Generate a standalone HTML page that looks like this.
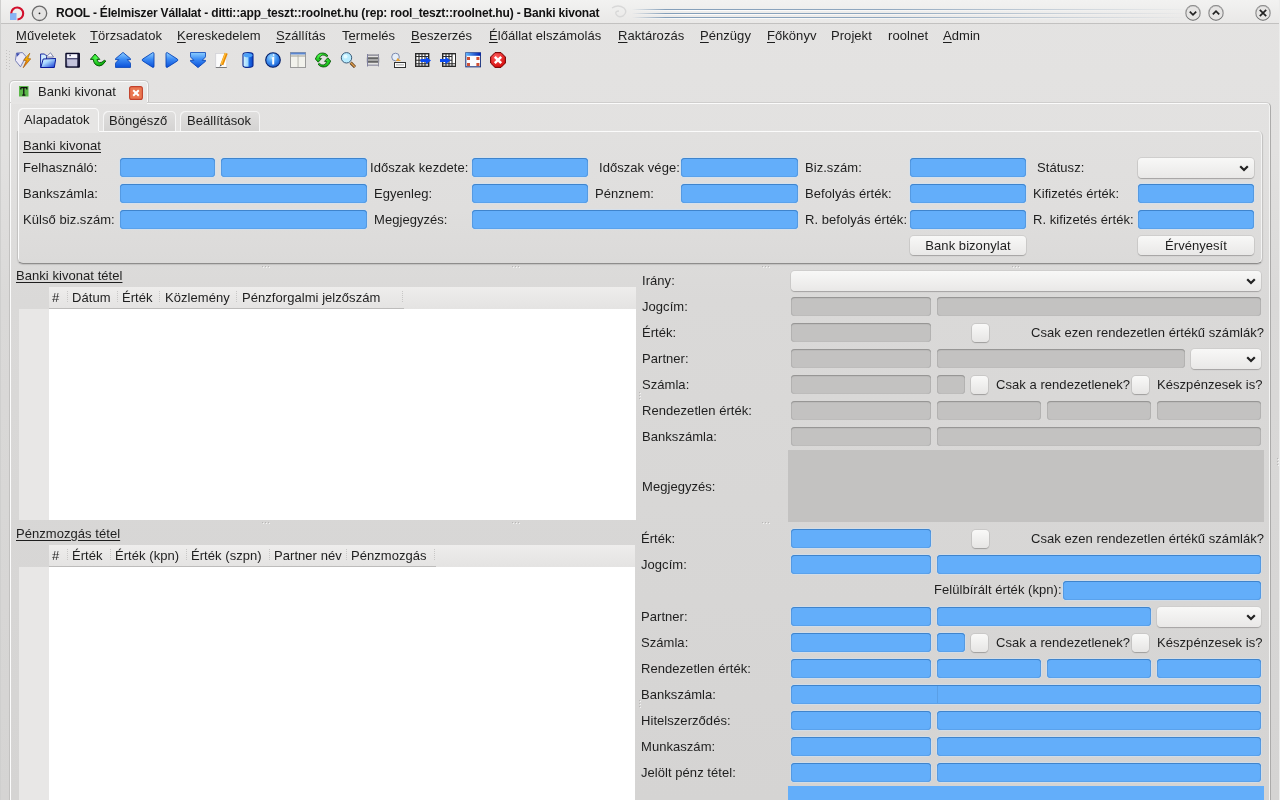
<!DOCTYPE html><html><head><meta charset="utf-8"><style>
*{margin:0;padding:0;box-sizing:border-box}
html,body{width:1280px;height:800px;overflow:hidden}
body{position:relative;background:linear-gradient(#e4e3e2 0px,#e2e1e0 150px,#dad9d8 300px,#d8d7d6 500px,#d5d4d3 800px);font-family:"Liberation Sans",sans-serif;font-size:13px;color:#1e1e1e}
div,svg{position:absolute}
.t{white-space:pre;line-height:15px;font-size:13px;letter-spacing:0.05px;will-change:transform}
.u{text-decoration:underline;text-underline-offset:2px}
.fld{border-radius:4px}
.fld.b{background:#63aefa;box-shadow:inset 0 1px 0 #3f84cc, inset 1px 0 0 #559ae2, inset -1px 0 0 #559ae2, inset 0 -1px 0 #5aa2ec, 0 0 0 1px rgba(205,225,245,0.55)}
.fld.g{background:#c3c2c1;box-shadow:inset 0 1px 0 #979695, inset 0 2px 0 #bbbab9, inset 1px 0 0 #b3b2b1, inset -1px 0 0 #b3b2b1, inset 0 -1px 0 #bdbcbb}
.cmb,.btn{border-radius:4px;background:linear-gradient(#f8f8f7,#e9e8e7);box-shadow:0 1px 1px #a5a4a3, 0 0 0 1px #cfcecd}
.btn span{position:absolute;left:0;right:0;top:2px;text-align:center;white-space:pre;line-height:15px;letter-spacing:0.05px;will-change:transform}
.sep{width:1px;height:11px;background:repeating-linear-gradient(#c8c7c6 0 1px,transparent 1px 2px)}
.chk{border-radius:4px;background:linear-gradient(#f9f9f8,#e6e5e4);box-shadow:0 1px 1px #a09f9e, 0 0 0 1px #c9c8c7}
</style></head><body><div style="left:0;top:0;width:1280px;height:23px;background:linear-gradient(#f2f2f1,#e9e8e7)"></div>
<div style="left:0;top:23px;width:1280px;height:1px;background:#c2c1c0"></div>
<div class="t" style="left:56px;top:6px;font-weight:bold;font-size:12px;letter-spacing:-0.18px;color:#111">ROOL - Élelmiszer Vállalat - ditti::app_teszt::roolnet.hu (rep: rool_teszt::roolnet.hu) - Banki kivonat</div>
<div class="t" style="left:16px;top:28px"><span class="u">M</span>űveletek</div>
<div class="t" style="left:90px;top:28px"><span class="u">T</span>örzsadatok</div>
<div class="t" style="left:177px;top:28px"><span class="u">K</span>ereskedelem</div>
<div class="t" style="left:276px;top:28px"><span class="u">S</span>zállítás</div>
<div class="t" style="left:342px;top:28px">T<span class="u">e</span>rmelés</div>
<div class="t" style="left:411px;top:28px"><span class="u">B</span>eszerzés</div>
<div class="t" style="left:489px;top:28px"><span class="u">É</span>lőállat elszámolás</div>
<div class="t" style="left:618px;top:28px"><span class="u">R</span>aktározás</div>
<div class="t" style="left:700px;top:28px"><span class="u">P</span>énzügy</div>
<div class="t" style="left:767px;top:28px"><span class="u">F</span>őkönyv</div>
<div class="t" style="left:831px;top:28px">Pro<span class="u">j</span>ekt</div>
<div class="t" style="left:888px;top:28px">roolnet</div>
<div class="t" style="left:943px;top:28px"><span class="u">A</span>dmin</div>
<svg style="left:8px;top:4px" width="18" height="18" viewBox="0 0 18 18"><rect x="2" y="9" width="6.5" height="7" fill="#8ab4f4"/><path d="M3.2 9.2 A6 6 0 1 1 9.5 15.5" fill="none" stroke="#d2102c" stroke-width="2.1"/></svg>
<svg style="left:31px;top:5px" width="17" height="17" viewBox="0 0 17 17"><circle cx="8.5" cy="8.3" r="7.2" fill="#e4e3e2" stroke="#6a6a6a" stroke-width="1.3"/><circle cx="8.5" cy="8.3" r="0.9" fill="#222"/></svg>
<svg style="left:606px;top:2px" width="26" height="20" viewBox="0 0 26 20"><path d="M6 6 Q12 2 18 6 Q22 10 17 14 Q12 16 10 12 Q9 9 13 9" fill="none" stroke="#d8d8d8" stroke-width="1.4"/></svg>
<div style="left:632px;top:9px;width:560px;height:1px;background:linear-gradient(to right,rgba(120,150,180,0) 0%,rgba(120,150,180,0.9) 6%,rgba(120,150,180,0.8) 45%,rgba(150,170,190,0.35) 80%,rgba(150,170,190,0) 100%)"></div>
<div style="left:632px;top:10px;width:560px;height:1px;background:linear-gradient(to right,rgba(255,255,255,0) 0%,rgba(255,255,255,0.9) 10%,rgba(255,255,255,0) 100%)"></div>
<div style="left:632px;top:13px;width:560px;height:1px;background:linear-gradient(to right,rgba(120,150,180,0) 0%,rgba(120,150,180,0.9) 6%,rgba(120,150,180,0.8) 45%,rgba(150,170,190,0.35) 80%,rgba(150,170,190,0) 100%)"></div>
<div style="left:632px;top:14px;width:560px;height:1px;background:linear-gradient(to right,rgba(255,255,255,0) 0%,rgba(255,255,255,0.9) 10%,rgba(255,255,255,0) 100%)"></div>
<div style="left:632px;top:17px;width:560px;height:1px;background:linear-gradient(to right,rgba(120,150,180,0) 0%,rgba(120,150,180,0.9) 6%,rgba(120,150,180,0.8) 45%,rgba(150,170,190,0.35) 80%,rgba(150,170,190,0) 100%)"></div>
<div style="left:632px;top:18px;width:560px;height:1px;background:linear-gradient(to right,rgba(255,255,255,0) 0%,rgba(255,255,255,0.9) 10%,rgba(255,255,255,0) 100%)"></div>
<svg style="left:1183.5px;top:4px" width="18" height="18" viewBox="0 0 18 18"><circle cx="9" cy="9" r="7.3" fill="#e6e5e4" stroke="#727272" stroke-width="1.2"/><circle cx="9" cy="9.6" r="7.6" fill="none" stroke="#ffffff" stroke-opacity="0.6" stroke-width="0.6"/><path d="M5.8 7.6 L9 10.8 L12.2 7.6" fill="none" stroke="#222" stroke-width="1.7"/></svg>
<svg style="left:1206.5px;top:4px" width="18" height="18" viewBox="0 0 18 18"><circle cx="9" cy="9" r="7.3" fill="#e6e5e4" stroke="#727272" stroke-width="1.2"/><circle cx="9" cy="9.6" r="7.6" fill="none" stroke="#ffffff" stroke-opacity="0.6" stroke-width="0.6"/><path d="M5.8 10.4 L9 7.2 L12.2 10.4" fill="none" stroke="#222" stroke-width="1.7"/></svg>
<svg style="left:1253.5px;top:4px" width="18" height="18" viewBox="0 0 18 18"><circle cx="9" cy="9" r="7.3" fill="#e6e5e4" stroke="#727272" stroke-width="1.2"/><circle cx="9" cy="9.6" r="7.6" fill="none" stroke="#ffffff" stroke-opacity="0.6" stroke-width="0.6"/><path d="M5.8 5.8 L12.2 12.2 M12.2 5.8 L5.8 12.2" fill="none" stroke="#222" stroke-width="1.7"/></svg>
<div style="left:6px;top:50px;width:1px;height:1px;background:#c4c3c2"></div>
<div style="left:9px;top:51px;width:1px;height:1px;background:#c4c3c2"></div>
<div style="left:6px;top:53px;width:1px;height:1px;background:#c4c3c2"></div>
<div style="left:9px;top:54px;width:1px;height:1px;background:#c4c3c2"></div>
<div style="left:6px;top:56px;width:1px;height:1px;background:#c4c3c2"></div>
<div style="left:9px;top:57px;width:1px;height:1px;background:#c4c3c2"></div>
<div style="left:6px;top:59px;width:1px;height:1px;background:#c4c3c2"></div>
<div style="left:9px;top:60px;width:1px;height:1px;background:#c4c3c2"></div>
<div style="left:6px;top:62px;width:1px;height:1px;background:#c4c3c2"></div>
<div style="left:9px;top:63px;width:1px;height:1px;background:#c4c3c2"></div>
<div style="left:6px;top:65px;width:1px;height:1px;background:#c4c3c2"></div>
<div style="left:9px;top:66px;width:1px;height:1px;background:#c4c3c2"></div>
<div style="left:6px;top:68px;width:1px;height:1px;background:#c4c3c2"></div>
<div style="left:9px;top:69px;width:1px;height:1px;background:#c4c3c2"></div>
<svg width="0" height="0" style="position:absolute"><defs>
<linearGradient id="gBlue" x1="0" y1="0" x2="0" y2="1"><stop offset="0" stop-color="#8fd0ff"/><stop offset="0.45" stop-color="#3c8cf5"/><stop offset="1" stop-color="#0a4fd8"/></linearGradient>
<linearGradient id="gBlueH" x1="0" y1="0" x2="1" y2="0"><stop offset="0" stop-color="#d8f6ff"/><stop offset="0.5" stop-color="#9ad8ff"/><stop offset="0.6" stop-color="#1e6ee8"/><stop offset="1" stop-color="#0b45c8"/></linearGradient>
<linearGradient id="gBolt" x1="0" y1="0" x2="0" y2="1"><stop offset="0" stop-color="#ffe000"/><stop offset="1" stop-color="#e05a00"/></linearGradient>
<linearGradient id="gFolder" x1="0" y1="0" x2="1" y2="1"><stop offset="0" stop-color="#e8f8ff"/><stop offset="0.4" stop-color="#a8d8ff"/><stop offset="1" stop-color="#0830d0"/></linearGradient>
<linearGradient id="gFloppy" x1="0" y1="0" x2="0" y2="1"><stop offset="0" stop-color="#f4f4ff"/><stop offset="1" stop-color="#9090b8"/></linearGradient>
<radialGradient id="gGreen" cx="0.4" cy="0.3" r="0.8"><stop offset="0" stop-color="#50ff50"/><stop offset="1" stop-color="#00a000"/></radialGradient>
<radialGradient id="gInfo" cx="0.4" cy="0.3" r="0.8"><stop offset="0" stop-color="#a0dcff"/><stop offset="0.5" stop-color="#3c8ef0"/><stop offset="1" stop-color="#0a48c0"/></radialGradient>
<radialGradient id="gRed" cx="0.4" cy="0.3" r="0.8"><stop offset="0" stop-color="#ff6060"/><stop offset="1" stop-color="#d00000"/></radialGradient>
<linearGradient id="gTitleBar" x1="0" y1="0" x2="1" y2="0"><stop offset="0" stop-color="#60b8ff"/><stop offset="1" stop-color="#0020b0"/></linearGradient>
</defs></svg>
<svg style="left:15px;top:52px" width="16" height="16" viewBox="0 0 16 16"><path d="M1.5 1 L7.5 0.6 L11 4.5 L5.5 14.8 L0.4 8.5 Z" fill="#eceaf8" stroke="#6a74b0" stroke-width="0.9"/><path d="M1.5 1 L5 1.5 L1.8 5 Z" fill="#4050b0"/><path d="M14.8 1.2 L8.5 8.3 L11.3 8.6 L8.2 15.8 L15.8 6.8 L12.8 6.6 Z" fill="url(#gBolt)" stroke="#a05000" stroke-width="0.6"/></svg>
<svg style="left:40px;top:52px" width="16" height="16" viewBox="0 0 16 16"><path d="M0.6 2 L4.5 2 L5.8 3.4 L6.5 3.4 L6.5 15.5 L0.6 15.5 Z" fill="#d0ecff" stroke="#1a2aa0" stroke-width="1"/><path d="M6 5 L10.5 0.8 L13.5 5 Z" fill="#fafaff" stroke="#505a90" stroke-width="0.7"/><path d="M0.8 15.5 L3.2 7 L15.8 6.5 L14.3 15.5 Z" fill="url(#gFolder)" stroke="#0a1a9a" stroke-width="1"/></svg>
<svg style="left:65px;top:52px" width="16" height="16" viewBox="0 0 16 16"><rect x="1" y="1.6" width="13.2" height="13.4" rx="0.3" fill="url(#gFloppy)" stroke="#0a0a28" stroke-width="1.5"/><rect x="2.6" y="2.6" width="9.6" height="3.2" fill="#f8f8ff"/><rect x="2.2" y="6" width="10.6" height="1.4" fill="#50507a"/><rect x="3.2" y="8" width="8.8" height="6.2" fill="#c4c4dc"/><rect x="4.4" y="2.6" width="1.4" height="1.6" fill="#303050"/><rect x="12.4" y="2" width="1.4" height="13" fill="#0a0a28"/></svg>
<svg style="left:90px;top:52px" width="16" height="16" viewBox="0 0 16 16"><path d="M5 2 L0.3 7.4 L3.3 7.4 Q3.8 13.4 9.3 14 Q12.5 14.2 15.8 9 L14.3 8.3 Q11.8 11 9.5 10.6 Q7 10 7 7.4 L9.8 7.4 Z" fill="url(#gGreen)" stroke="#005000" stroke-width="0.9" stroke-linejoin="round"/></svg>
<svg style="left:115px;top:52px" width="16" height="16" viewBox="0 0 16 16"><path d="M8 0.4 L15.6 6.8 L15.6 7.6 L12.2 7.6 L15.6 11.2 L15.6 15 Q15.6 15.6 15 15.6 L1 15.6 Q0.4 15.6 0.4 15 L0.4 11.2 L3.8 7.6 L0.4 7.6 L0.4 6.8 Z" fill="url(#gBlue)" stroke="#0a46b8" stroke-width="0.9" stroke-linejoin="round"/></svg>
<svg style="left:140px;top:52px" width="16" height="16" viewBox="0 0 16 16"><path d="M12.8 0.6 Q14 0.4 14 1.8 L14 14.2 Q14 15.6 12.8 15.4 L2.6 8.9 Q1.6 8 2.6 7.1 Z" fill="url(#gBlue)" stroke="#0a46b8" stroke-width="0.9"/></svg>
<svg style="left:165px;top:52px" width="16" height="16" viewBox="0 0 16 16"><path d="M2.2 0.6 Q1 0.4 1 1.8 L1 14.2 Q1 15.6 2.2 15.4 L12.4 8.9 Q13.4 8 12.4 7.1 Z" fill="url(#gBlue)" stroke="#0a46b8" stroke-width="0.9"/></svg>
<svg style="left:190px;top:52px" width="16" height="16" viewBox="0 0 16 16"><path d="M8 15.6 L15.6 9.2 L15.6 8.4 L12.2 8.4 L15.6 4.8 L15.6 1 Q15.6 0.4 15 0.4 L1 0.4 Q0.4 0.4 0.4 1 L0.4 4.8 L3.8 8.4 L0.4 8.4 L0.4 9.2 Z" fill="url(#gBlue)" stroke="#0a46b8" stroke-width="0.9" stroke-linejoin="round"/></svg>
<svg style="left:215px;top:52px" width="16" height="16" viewBox="0 0 16 16"><rect x="0.8" y="1.5" width="11" height="14" fill="#fcfcfc" stroke="#c8c8d0" stroke-width="0.6"/><rect x="0.8" y="15" width="11" height="0.9" fill="#707070"/><path d="M11.2 1.2 L6.8 12.8" stroke="#e88a00" stroke-width="3.2"/><path d="M10.6 1 L6.2 12.6" stroke="#ffc040" stroke-width="1.2"/><path d="M5.5 12.2 L4.6 14.8 L7 13.2 Z" fill="#505050"/></svg>
<svg style="left:240px;top:52px" width="16" height="16" viewBox="0 0 16 16"><path d="M3 2.5 Q3 0.6 8 0.6 Q13 0.6 13 2.5 L13 13.5 Q13 15.4 8 15.4 Q3 15.4 3 13.5 Z" fill="url(#gBlueH)" stroke="#0a2890" stroke-width="1.1"/><ellipse cx="8" cy="3.2" rx="4.4" ry="2" fill="#4aa0f8"/></svg>
<svg style="left:265px;top:52px" width="16" height="16" viewBox="0 0 16 16"><circle cx="8" cy="8" r="7.3" fill="url(#gInfo)" stroke="#06206a" stroke-width="1.1"/><path d="M7 5.5 L9.2 4.5 L9.2 12.5 L7.2 12.5 L7.2 6.5 L6.6 6.5 Z" fill="#fff"/><circle cx="8.6" cy="3" r="0.9" fill="#e8f4ff"/></svg>
<svg style="left:290px;top:52px" width="16" height="16" viewBox="0 0 16 16"><rect x="0.5" y="0.5" width="15" height="15" fill="#f2f2ec" stroke="#9a9a9a" stroke-width="1"/><rect x="0.5" y="0.5" width="15" height="2" fill="#5a86d0"/><rect x="1" y="3" width="14" height="2" fill="#c8c8c0"/><rect x="7.6" y="3" width="0.9" height="12" fill="#b0b0a8"/></svg>
<svg style="left:315px;top:52px" width="16" height="16" viewBox="0 0 16 16"><path d="M1 6 Q2.5 0.8 8 1 Q11 1 13 3.8 L11.5 4.6 Q10 2.8 7.8 3 Q5 3.2 4.2 6.6 L6.5 6.6 L3.2 10.2 L0 6.6 Z" fill="url(#gGreen)" stroke="#004a00" stroke-width="0.8" stroke-linejoin="round"/><path d="M15 10 Q13.5 15.2 8 15 Q5 15 3 12.2 L4.5 11.4 Q6 13.2 8.2 13 Q11 12.8 11.8 9.4 L9.5 9.4 L12.8 5.8 L16 9.4 Z" fill="url(#gGreen)" stroke="#004a00" stroke-width="0.8" stroke-linejoin="round"/></svg>
<svg style="left:340px;top:52px" width="16" height="16" viewBox="0 0 16 16"><path d="M10.6 10.6 L15 15" stroke="#503010" stroke-width="3"/><path d="M10.8 10.8 L14.8 14.8" stroke="#e0a050" stroke-width="1.6"/><circle cx="6.5" cy="5.8" r="5.2" fill="#b8ecff" stroke="#3a5a78" stroke-width="1"/><circle cx="5.5" cy="4.5" r="2" fill="#e4faff"/></svg>
<svg style="left:365px;top:52px" width="16" height="16" viewBox="0 0 16 16"><rect x="2" y="2.5" width="12" height="1.2" fill="#7a7a88"/><rect x="2.4" y="6" width="11.2" height="4" fill="#a8a8a8" stroke="#202020" stroke-width="1"/><rect x="2" y="12.5" width="12" height="1.4" fill="#9a9aaa"/><rect x="2" y="2" width="1" height="12.5" fill="#8080a0"/><rect x="13" y="2" width="1" height="12.5" fill="#9090a0"/></svg>
<svg style="left:390px;top:52px" width="16" height="16" viewBox="0 0 16 16"><circle cx="5.5" cy="5" r="3.8" fill="#e6eef8" stroke="#7080a8" stroke-width="0.9"/><path d="M7.5 6 L11 9 L6 9 Z" fill="#e8a030"/><rect x="4.5" y="10.5" width="11" height="5" fill="#fbfbfb" stroke="#303030" stroke-width="1"/><rect x="6" y="12.5" width="8" height="0.8" fill="#909090"/></svg>
<svg style="left:415px;top:52px" width="16" height="16" viewBox="0 0 16 16"><rect x="0.7" y="1.7" width="13" height="12.6" fill="#fff" stroke="#2a2a2a" stroke-width="1.4"/><path d="M4 1.7 V14.3 M7 1.7 V14.3 M10 1.7 V14.3 M0.7 4.5 H13.7 M0.7 8.2 H13.7 M0.7 11.8 H13.7" stroke="#2a2a2a" stroke-width="1.1"/><path d="M5.5 7 L11 7 L11 4.8 L16 8.5 L11 12.2 L11 10 L5.5 10 Z" fill="#0a4af0"/></svg>
<svg style="left:440px;top:52px" width="16" height="16" viewBox="0 0 16 16"><rect x="2.7" y="1.7" width="13" height="12.6" fill="#fff" stroke="#2a2a2a" stroke-width="1.4"/><path d="M6 1.7 V14.3 M9 1.7 V14.3 M12 1.7 V14.3 M2.7 4.5 H12 M2.7 8.2 H12 M2.7 11.8 H15.7" stroke="#2a2a2a" stroke-width="1.1"/><path d="M0 7 L5.5 7 L5.5 4.8 L10.5 8.5 L5.5 12.2 L5.5 10 L0 10 Z" fill="#0a4af0"/></svg>
<svg style="left:465px;top:52px" width="16" height="16" viewBox="0 0 16 16"><rect x="0.8" y="0.8" width="14.8" height="14" fill="#fafcff" stroke="#203880" stroke-width="1.1"/><rect x="0.8" y="0.8" width="14.8" height="3" fill="url(#gTitleBar)"/><rect x="2" y="5" width="3" height="3" fill="#c83010" opacity="0.85"/><rect x="11.4" y="5" width="3" height="3" fill="#c83010" opacity="0.85"/><rect x="2" y="11" width="3" height="3" fill="#c83010" opacity="0.85"/><rect x="11.4" y="11" width="3" height="3" fill="#c83010" opacity="0.85"/></svg>
<svg style="left:490px;top:52px" width="16" height="16" viewBox="0 0 16 16"><path d="M5 0.6 L11 0.6 L15.4 5 L15.4 11 L11 15.4 L5 15.4 L0.6 11 L0.6 5 Z" fill="url(#gRed)" stroke="#700000" stroke-width="1"/><path d="M4.8 4.8 L11.2 11.2 M11.2 4.8 L4.8 11.2" stroke="#fff" stroke-width="2.4"/></svg>
<div style="left:9px;top:80px;width:140px;height:24px;border-radius:5px 5px 0 0;background:linear-gradient(#eaeae9,#e4e3e2);border:1px solid #c8c7c6;border-bottom:none;box-shadow:inset 1px 1px 0 #fbfbfb, inset -1px 0 0 #fafafa"></div>
<div class="t" style="left:38px;top:84px">Banki kivonat</div>
<svg style="left:19px;top:86px" width="10" height="11" viewBox="0 0 10 11"><rect x="0" y="0" width="9.5" height="10.5" fill="#5cb84a"/><path d="M1.8 1.6 H7.8 V3.6 M1.8 1.6 V3.6 M4.8 1.6 V9.2 M3.2 9.2 H6.4" fill="none" stroke="#101010" stroke-width="1.3"/></svg>
<svg style="left:129px;top:86px" width="14" height="14" viewBox="0 0 14 14"><rect x="0.6" y="0.6" width="12.8" height="12.8" rx="2" fill="#ea7650" stroke="#c2402a" stroke-width="1.1"/><path d="M4.2 4.2 L9.8 9.8 M9.8 4.2 L4.2 9.8" stroke="#fff" stroke-width="2"/></svg>
<div style="left:9px;top:102px;width:1262px;height:700px;border-radius:0 5px 0 0;border-top:1px solid #cfcecd;border-left:1px solid #c2c1c0;border-right:1px solid #acabaa;box-shadow:inset 1px 1px 0 #fbfbfb, inset -1px 0 0 #f4f4f3"></div>
<div style="left:11px;top:102px;width:136px;height:2px;background:#e6e5e4"></div>
<div style="left:18px;top:108px;width:81px;height:24px;border-radius:5px 5px 0 0;background:#e6e5e4;box-shadow:inset 1px 1px 0 #fbfbfb, inset -1px 0 0 #fafafa"></div>
<div style="left:103px;top:111px;width:73px;height:21px;border-radius:5px 5px 0 0;background:linear-gradient(#e1e0df,#d3d2d1);box-shadow:inset 1px 1px 0 #f5f5f5, inset -1px 0 0 #f5f5f5"></div>
<div style="left:180px;top:111px;width:80px;height:21px;border-radius:5px 5px 0 0;background:linear-gradient(#e1e0df,#d3d2d1);box-shadow:inset 1px 1px 0 #f5f5f5, inset -1px 0 0 #f5f5f5"></div>
<div class="t" style="left:24px;top:112px">Alapadatok</div>
<div class="t" style="left:109px;top:113px">Böngésző</div>
<div class="t" style="left:187px;top:113px">Beállítások</div>
<div style="left:17px;top:131px;width:1246px;height:133px;border-radius:0 5px 6px 6px;background:linear-gradient(#e1e0df 0%,#dfdedd 60%,#dbdad9 100%);border-left:1px solid #c4c3c2;border-right:1px solid #c4c3c2;border-bottom:1px solid #8e8d8c;box-shadow:inset 1px 1px 0 #fbfbfb, inset -1px 0 0 #f4f4f4, 0 1px 1px #c2c1c0"></div>
<div style="left:19px;top:131px;width:80px;height:2px;background:#e6e5e4"></div>
<div class="t u" style="left:23px;top:138px">Banki kivonat</div>
<div class="t" style="left:23px;top:160px">Felhasználó:</div>
<div class="fld b" style="left:120px;top:158px;width:95px;height:19px;"></div>
<div class="fld b" style="left:221px;top:158px;width:146px;height:19px;"></div>
<div class="t" style="left:370px;top:160px">Időszak kezdete:</div>
<div class="fld b" style="left:472px;top:158px;width:116px;height:19px;"></div>
<div class="t" style="left:599px;top:160px">Időszak vége:</div>
<div class="fld b" style="left:681px;top:158px;width:117px;height:19px;"></div>
<div class="t" style="left:805px;top:160px">Biz.szám:</div>
<div class="fld b" style="left:910px;top:158px;width:116px;height:19px;"></div>
<div class="t" style="left:1037px;top:160px">Státusz:</div>
<div class="cmb" style="left:1138px;top:158px;width:116px;height:20px;"><svg class="arr" style="left:101px;top:7px" width="10" height="7" viewBox="0 0 10 7"><path d="M1.2 1.2 L5 5 L8.8 1.2" fill="none" stroke="#222" stroke-width="2.2"/></svg></div>
<div class="t" style="left:23px;top:186px">Bankszámla:</div>
<div class="fld b" style="left:120px;top:184px;width:247px;height:19px;"></div>
<div class="t" style="left:374px;top:186px">Egyenleg:</div>
<div class="fld b" style="left:472px;top:184px;width:116px;height:19px;"></div>
<div class="t" style="left:595px;top:186px">Pénznem:</div>
<div class="fld b" style="left:681px;top:184px;width:117px;height:19px;"></div>
<div class="t" style="left:805px;top:186px">Befolyás érték:</div>
<div class="fld b" style="left:910px;top:184px;width:116px;height:19px;"></div>
<div class="t" style="left:1033px;top:186px">Kifizetés érték:</div>
<div class="fld b" style="left:1138px;top:184px;width:116px;height:19px;"></div>
<div class="t" style="left:23px;top:212px">Külső biz.szám:</div>
<div class="fld b" style="left:120px;top:210px;width:247px;height:19px;"></div>
<div class="t" style="left:374px;top:212px">Megjegyzés:</div>
<div class="fld b" style="left:472px;top:210px;width:326px;height:19px;"></div>
<div class="t" style="left:805px;top:212px">R. befolyás érték:</div>
<div class="fld b" style="left:910px;top:210px;width:116px;height:19px;"></div>
<div class="t" style="left:1033px;top:212px">R. kifizetés érték:</div>
<div class="fld b" style="left:1138px;top:210px;width:116px;height:19px;"></div>
<div class="btn" style="left:910px;top:236px;width:116px;height:19px;"><span>Bank bizonylat</span></div>
<div class="btn" style="left:1138px;top:236px;width:116px;height:19px;"><span>Érvényesít</span></div>
<div style="left:49px;top:287px;width:587px;height:233px;background:#fff"></div>
<div style="left:49px;top:287px;width:587px;height:22px;background:linear-gradient(#eeedec,#e4e3e2)"></div>
<div style="left:19px;top:309px;width:30px;height:211px;background:#e8e7e6"></div>
<div style="left:49px;top:308px;width:355px;height:1px;background:#bdbcbb"></div>
<div class="t u" style="left:16px;top:268px">Banki kivonat tétel</div>
<div class="t" style="left:52px;top:290px">#</div>
<div class="t" style="left:72px;top:290px">Dátum</div>
<div class="t" style="left:122px;top:290px">Érték</div>
<div class="t" style="left:165px;top:290px">Közlemény</div>
<div class="t" style="left:242px;top:290px">Pénzforgalmi jelzőszám</div>
<div class="sep" style="left:67px;top:291px"></div>
<div class="sep" style="left:117px;top:291px"></div>
<div class="sep" style="left:159px;top:291px"></div>
<div class="sep" style="left:236px;top:291px"></div>
<div class="sep" style="left:402px;top:291px"></div>
<div style="left:49px;top:545px;width:586px;height:260px;background:#fff"></div>
<div style="left:49px;top:545px;width:586px;height:22px;background:linear-gradient(#eeedec,#e4e3e2)"></div>
<div style="left:19px;top:567px;width:30px;height:240px;background:#e8e7e6"></div>
<div style="left:49px;top:566px;width:387px;height:1px;background:#bdbcbb"></div>
<div class="t u" style="left:16px;top:526px">Pénzmozgás tétel</div>
<div class="t" style="left:52px;top:548px">#</div>
<div class="t" style="left:72px;top:548px">Érték</div>
<div class="t" style="left:115px;top:548px">Érték (kpn)</div>
<div class="t" style="left:191px;top:548px">Érték (szpn)</div>
<div class="t" style="left:274px;top:548px">Partner név</div>
<div class="t" style="left:351px;top:548px">Pénzmozgás</div>
<div class="sep" style="left:67px;top:549px"></div>
<div class="sep" style="left:110px;top:549px"></div>
<div class="sep" style="left:186px;top:549px"></div>
<div class="sep" style="left:269px;top:549px"></div>
<div class="sep" style="left:346px;top:549px"></div>
<div class="sep" style="left:434px;top:549px"></div>
<div class="t" style="left:642px;top:273px">Irány:</div>
<div class="cmb" style="left:791px;top:271px;width:470px;height:20px;"><svg class="arr" style="left:455px;top:7px" width="10" height="7" viewBox="0 0 10 7"><path d="M1.2 1.2 L5 5 L8.8 1.2" fill="none" stroke="#222" stroke-width="2.2"/></svg></div>
<div class="t" style="left:642px;top:299px">Jogcím:</div>
<div class="fld g" style="left:791px;top:297px;width:140px;height:19px;"></div>
<div class="fld g" style="left:937px;top:297px;width:324px;height:19px;"></div>
<div class="t" style="left:642px;top:325px">Érték:</div>
<div class="fld g" style="left:791px;top:323px;width:140px;height:19px;"></div>
<div class="chk" style="left:972px;top:324px;width:17px;height:18px;"></div>
<div class="t" style="left:1031px;top:325px">Csak ezen rendezetlen értékű számlák?</div>
<div class="t" style="left:642px;top:351px">Partner:</div>
<div class="fld g" style="left:791px;top:349px;width:140px;height:19px;"></div>
<div class="fld g" style="left:937px;top:349px;width:248px;height:19px;"></div>
<div class="cmb" style="left:1191px;top:349px;width:70px;height:20px;"><svg class="arr" style="left:55px;top:7px" width="10" height="7" viewBox="0 0 10 7"><path d="M1.2 1.2 L5 5 L8.8 1.2" fill="none" stroke="#222" stroke-width="2.2"/></svg></div>
<div class="t" style="left:642px;top:377px">Számla:</div>
<div class="fld g" style="left:791px;top:375px;width:140px;height:19px;"></div>
<div class="fld g" style="left:937px;top:375px;width:28px;height:19px;"></div>
<div class="chk" style="left:971px;top:376px;width:17px;height:18px;"></div>
<div class="t" style="left:996px;top:377px">Csak a rendezetlenek?</div>
<div class="chk" style="left:1132px;top:376px;width:17px;height:18px;"></div>
<div class="t" style="left:1157px;top:377px">Készpénzesek is?</div>
<div class="t" style="left:642px;top:403px">Rendezetlen érték:</div>
<div class="fld g" style="left:791px;top:401px;width:140px;height:19px;"></div>
<div class="fld g" style="left:937px;top:401px;width:104px;height:19px;"></div>
<div class="fld g" style="left:1047px;top:401px;width:104px;height:19px;"></div>
<div class="fld g" style="left:1157px;top:401px;width:104px;height:19px;"></div>
<div class="t" style="left:642px;top:429px">Bankszámla:</div>
<div class="fld g" style="left:791px;top:427px;width:140px;height:19px;"></div>
<div class="fld g" style="left:937px;top:427px;width:324px;height:19px;"></div>
<div style="left:788px;top:450px;width:476px;height:72px;background:#c3c2c1"></div>
<div class="t" style="left:642px;top:479px">Megjegyzés:</div>
<div class="t" style="left:641px;top:531px">Érték:</div>
<div class="fld b" style="left:791px;top:529px;width:140px;height:19px;"></div>
<div class="chk" style="left:972px;top:530px;width:17px;height:18px;"></div>
<div class="t" style="left:1031px;top:531px">Csak ezen rendezetlen értékű számlák?</div>
<div class="t" style="left:641px;top:557px">Jogcím:</div>
<div class="fld b" style="left:791px;top:555px;width:140px;height:19px;"></div>
<div class="fld b" style="left:937px;top:555px;width:324px;height:19px;"></div>
<div class="t" style="left:934px;top:582px">Felülbírált érték (kpn):</div>
<div class="fld b" style="left:1063px;top:581px;width:198px;height:19px;"></div>
<div class="t" style="left:641px;top:609px">Partner:</div>
<div class="fld b" style="left:791px;top:607px;width:140px;height:19px;"></div>
<div class="fld b" style="left:937px;top:607px;width:214px;height:19px;"></div>
<div class="cmb" style="left:1157px;top:607px;width:104px;height:20px;"><svg class="arr" style="left:89px;top:7px" width="10" height="7" viewBox="0 0 10 7"><path d="M1.2 1.2 L5 5 L8.8 1.2" fill="none" stroke="#222" stroke-width="2.2"/></svg></div>
<div class="t" style="left:641px;top:635px">Számla:</div>
<div class="fld b" style="left:791px;top:633px;width:140px;height:19px;"></div>
<div class="fld b" style="left:937px;top:633px;width:28px;height:19px;"></div>
<div class="chk" style="left:971px;top:634px;width:17px;height:18px;"></div>
<div class="t" style="left:996px;top:635px">Csak a rendezetlenek?</div>
<div class="chk" style="left:1132px;top:634px;width:17px;height:18px;"></div>
<div class="t" style="left:1157px;top:635px">Készpénzesek is?</div>
<div class="t" style="left:641px;top:661px">Rendezetlen érték:</div>
<div class="fld b" style="left:791px;top:659px;width:140px;height:19px;"></div>
<div class="fld b" style="left:937px;top:659px;width:104px;height:19px;"></div>
<div class="fld b" style="left:1047px;top:659px;width:104px;height:19px;"></div>
<div class="fld b" style="left:1157px;top:659px;width:104px;height:19px;"></div>
<div class="t" style="left:641px;top:687px">Bankszámla:</div>
<div class="fld b" style="left:791px;top:685px;width:470px;height:19px;"></div>
<div style="left:937px;top:686px;width:1px;height:17px;background:#5a9fe6"></div>
<div class="t" style="left:641px;top:713px">Hitelszerződés:</div>
<div class="fld b" style="left:791px;top:711px;width:140px;height:19px;"></div>
<div class="fld b" style="left:937px;top:711px;width:324px;height:19px;"></div>
<div class="t" style="left:641px;top:739px">Munkaszám:</div>
<div class="fld b" style="left:791px;top:737px;width:140px;height:19px;"></div>
<div class="fld b" style="left:937px;top:737px;width:324px;height:19px;"></div>
<div class="t" style="left:641px;top:765px">Jelölt pénz tétel:</div>
<div class="fld b" style="left:791px;top:763px;width:140px;height:19px;"></div>
<div class="fld b" style="left:937px;top:763px;width:324px;height:19px;"></div>
<div style="left:788px;top:786px;width:476px;height:20px;background:#63aefa"></div>
<div style="left:262px;top:266px;width:1px;height:1px;background:#b8b7b6"></div>
<div style="left:263px;top:267px;width:1px;height:1px;background:#f4f4f4"></div>
<div style="left:265px;top:266px;width:1px;height:1px;background:#b8b7b6"></div>
<div style="left:266px;top:267px;width:1px;height:1px;background:#f4f4f4"></div>
<div style="left:268px;top:266px;width:1px;height:1px;background:#b8b7b6"></div>
<div style="left:269px;top:267px;width:1px;height:1px;background:#f4f4f4"></div>
<div style="left:512px;top:266px;width:1px;height:1px;background:#b8b7b6"></div>
<div style="left:513px;top:267px;width:1px;height:1px;background:#f4f4f4"></div>
<div style="left:515px;top:266px;width:1px;height:1px;background:#b8b7b6"></div>
<div style="left:516px;top:267px;width:1px;height:1px;background:#f4f4f4"></div>
<div style="left:518px;top:266px;width:1px;height:1px;background:#b8b7b6"></div>
<div style="left:519px;top:267px;width:1px;height:1px;background:#f4f4f4"></div>
<div style="left:762px;top:266px;width:1px;height:1px;background:#b8b7b6"></div>
<div style="left:763px;top:267px;width:1px;height:1px;background:#f4f4f4"></div>
<div style="left:765px;top:266px;width:1px;height:1px;background:#b8b7b6"></div>
<div style="left:766px;top:267px;width:1px;height:1px;background:#f4f4f4"></div>
<div style="left:768px;top:266px;width:1px;height:1px;background:#b8b7b6"></div>
<div style="left:769px;top:267px;width:1px;height:1px;background:#f4f4f4"></div>
<div style="left:1012px;top:266px;width:1px;height:1px;background:#b8b7b6"></div>
<div style="left:1013px;top:267px;width:1px;height:1px;background:#f4f4f4"></div>
<div style="left:1015px;top:266px;width:1px;height:1px;background:#b8b7b6"></div>
<div style="left:1016px;top:267px;width:1px;height:1px;background:#f4f4f4"></div>
<div style="left:1018px;top:266px;width:1px;height:1px;background:#b8b7b6"></div>
<div style="left:1019px;top:267px;width:1px;height:1px;background:#f4f4f4"></div>
<div style="left:262px;top:522px;width:1px;height:1px;background:#b8b7b6"></div>
<div style="left:263px;top:523px;width:1px;height:1px;background:#f4f4f4"></div>
<div style="left:265px;top:522px;width:1px;height:1px;background:#b8b7b6"></div>
<div style="left:266px;top:523px;width:1px;height:1px;background:#f4f4f4"></div>
<div style="left:268px;top:522px;width:1px;height:1px;background:#b8b7b6"></div>
<div style="left:269px;top:523px;width:1px;height:1px;background:#f4f4f4"></div>
<div style="left:512px;top:522px;width:1px;height:1px;background:#b8b7b6"></div>
<div style="left:513px;top:523px;width:1px;height:1px;background:#f4f4f4"></div>
<div style="left:515px;top:522px;width:1px;height:1px;background:#b8b7b6"></div>
<div style="left:516px;top:523px;width:1px;height:1px;background:#f4f4f4"></div>
<div style="left:518px;top:522px;width:1px;height:1px;background:#b8b7b6"></div>
<div style="left:519px;top:523px;width:1px;height:1px;background:#f4f4f4"></div>
<div style="left:762px;top:522px;width:1px;height:1px;background:#b8b7b6"></div>
<div style="left:763px;top:523px;width:1px;height:1px;background:#f4f4f4"></div>
<div style="left:765px;top:522px;width:1px;height:1px;background:#b8b7b6"></div>
<div style="left:766px;top:523px;width:1px;height:1px;background:#f4f4f4"></div>
<div style="left:768px;top:522px;width:1px;height:1px;background:#b8b7b6"></div>
<div style="left:769px;top:523px;width:1px;height:1px;background:#f4f4f4"></div>
<div style="left:639px;top:392px;width:1px;height:1px;background:#b8b7b6"></div>
<div style="left:640px;top:393px;width:1px;height:1px;background:#f4f4f4"></div>
<div style="left:639px;top:395px;width:1px;height:1px;background:#b8b7b6"></div>
<div style="left:640px;top:396px;width:1px;height:1px;background:#f4f4f4"></div>
<div style="left:639px;top:398px;width:1px;height:1px;background:#b8b7b6"></div>
<div style="left:640px;top:399px;width:1px;height:1px;background:#f4f4f4"></div>
<div style="left:639px;top:700px;width:1px;height:1px;background:#b8b7b6"></div>
<div style="left:640px;top:701px;width:1px;height:1px;background:#f4f4f4"></div>
<div style="left:639px;top:703px;width:1px;height:1px;background:#b8b7b6"></div>
<div style="left:640px;top:704px;width:1px;height:1px;background:#f4f4f4"></div>
<div style="left:639px;top:706px;width:1px;height:1px;background:#b8b7b6"></div>
<div style="left:640px;top:707px;width:1px;height:1px;background:#f4f4f4"></div>
<div style="left:1277px;top:458px;width:1px;height:1px;background:#b8b7b6"></div>
<div style="left:1278px;top:459px;width:1px;height:1px;background:#f4f4f4"></div>
<div style="left:1277px;top:461px;width:1px;height:1px;background:#b8b7b6"></div>
<div style="left:1278px;top:462px;width:1px;height:1px;background:#f4f4f4"></div>
<div style="left:1277px;top:464px;width:1px;height:1px;background:#b8b7b6"></div>
<div style="left:1278px;top:465px;width:1px;height:1px;background:#f4f4f4"></div>
<div style="left:0;top:0;width:1px;height:800px;background:#cfcfce"></div>
<div style="left:1279px;top:0;width:1px;height:800px;background:#ececeb"></div></body></html>
